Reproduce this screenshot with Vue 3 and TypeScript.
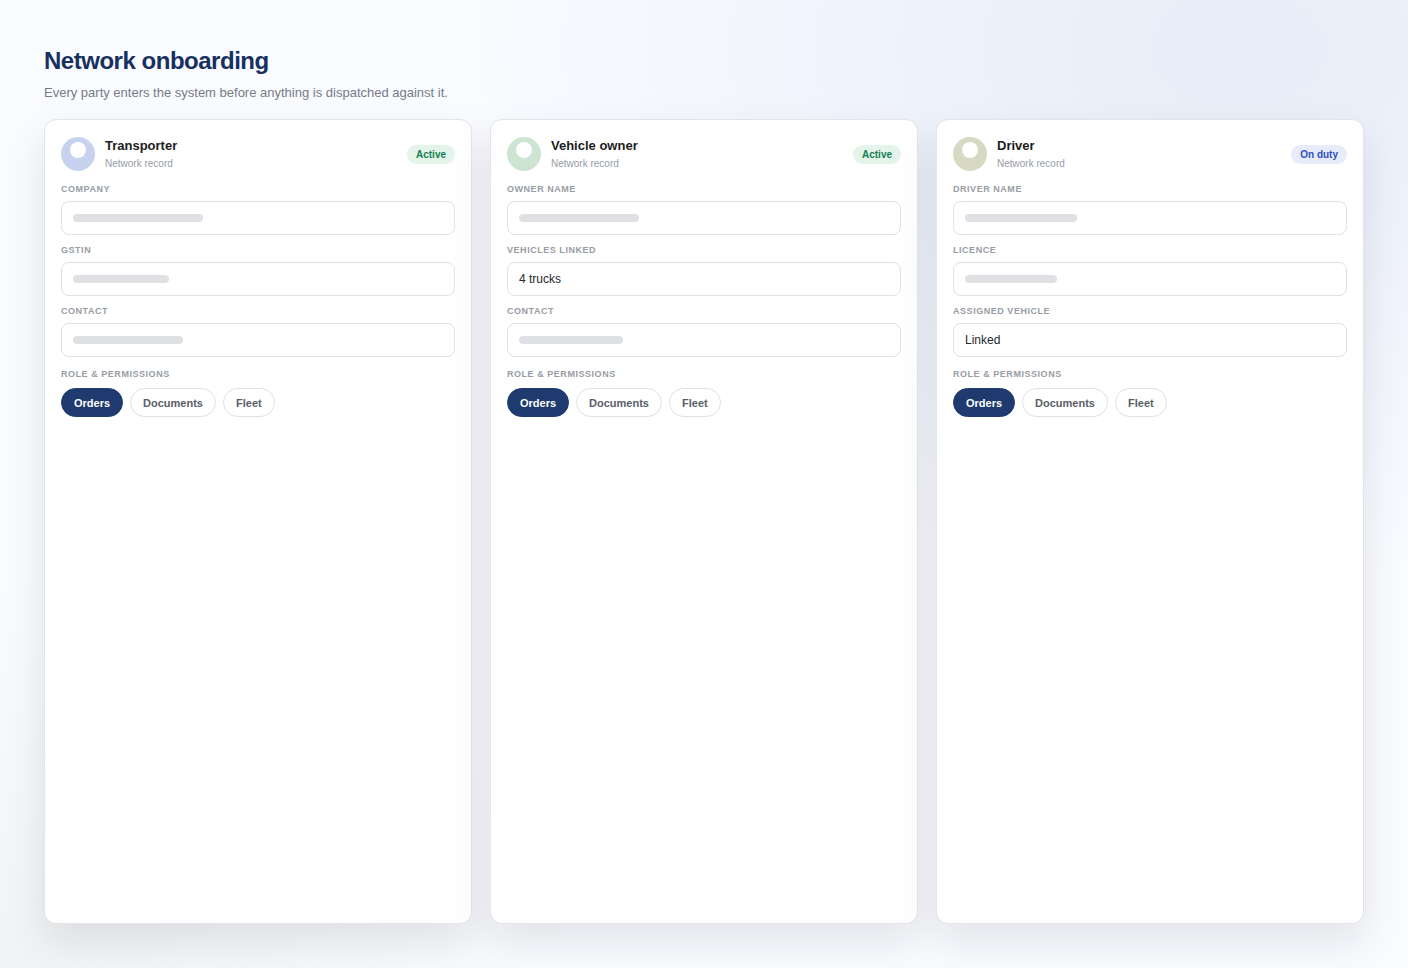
<script setup lang="ts">
import { reactive } from 'vue'

interface Field {
  id: string
  label: string
  value: string
  skeleton?: number
}

interface Party {
  id: string
  name: string
  status: string
  tone: 'green' | 'blue'
  avatar: 'sky' | 'mint' | 'olive'
  fields: Field[]
  active: string
}

const roles: string[] = ['Orders', 'Documents', 'Fleet']

const parties = reactive<Party[]>([
  {
    id: 'transporter',
    name: 'Transporter',
    status: 'Active',
    tone: 'green',
    avatar: 'sky',
    active: 'Orders',
    fields: [
      { id: 'company', label: 'Company', value: '', skeleton: 130 },
      { id: 'gstin', label: 'GSTIN', value: '', skeleton: 96 },
      { id: 'contact', label: 'Contact', value: '', skeleton: 110 },
    ],
  },
  {
    id: 'owner',
    name: 'Vehicle owner',
    status: 'Active',
    tone: 'green',
    avatar: 'mint',
    active: 'Orders',
    fields: [
      { id: 'name', label: 'Owner name', value: '', skeleton: 120 },
      { id: 'vehicles', label: 'Vehicles linked', value: '4 trucks' },
      { id: 'contact', label: 'Contact', value: '', skeleton: 104 },
    ],
  },
  {
    id: 'driver',
    name: 'Driver',
    status: 'On duty',
    tone: 'blue',
    avatar: 'olive',
    active: 'Orders',
    fields: [
      { id: 'name', label: 'Driver name', value: '', skeleton: 112 },
      { id: 'licence', label: 'Licence', value: '', skeleton: 92 },
      { id: 'vehicle', label: 'Assigned vehicle', value: 'Linked' },
    ],
  },
])
</script>

<template>
  <main class="page">
    <header class="intro">
      <h1>Network onboarding</h1>
      <p>Every party enters the system before anything is dispatched against it.</p>
    </header>

    <div class="cards">
      <section v-for="party in parties" :key="party.id" class="card">
        <div class="card-head">
          <svg class="avatar" :class="party.avatar" viewBox="0 0 34 34" aria-hidden="true">
            <circle cx="17" cy="17" r="17" fill="currentColor" />
            <circle cx="17" cy="13" r="8" fill="#fff" />
          </svg>
          <div class="who">
            <h2>{{ party.name }}</h2>
            <p>Network record</p>
          </div>
          <span class="badge" :class="party.tone">{{ party.status }}</span>
        </div>

        <div class="fields">
          <div v-for="field in party.fields" :key="field.id" class="field">
            <label class="caption" :for="`${party.id}-${field.id}`">{{ field.label }}</label>
            <div class="control">
              <input :id="`${party.id}-${field.id}`" v-model="field.value" type="text" />
              <span
                v-if="field.skeleton && !field.value"
                class="skeleton"
                :style="{ width: `${field.skeleton}px` }"
              ></span>
            </div>
          </div>
        </div>

        <div class="roles" role="group" :aria-labelledby="`${party.id}-roles`">
          <span :id="`${party.id}-roles`" class="caption">Role &amp; permissions</span>
          <div class="chips">
            <button
              v-for="role in roles"
              :key="role"
              type="button"
              class="chip"
              :class="{ selected: party.active === role }"
              :aria-pressed="party.active === role"
              @click="party.active = role"
            >
              {{ role }}
            </button>
          </div>
        </div>
      </section>
    </div>
  </main>
</template>

<style>
body {
  margin: 0;
}
</style>

<style scoped>
.page {
  box-sizing: border-box;
  min-height: 100vh;
  padding: 44px;
  display: flex;
  flex-direction: column;
  font-family: 'Liberation Sans', Arial, Helvetica, sans-serif;
  color: #1c1d21;
  background:
    radial-gradient(ellipse 55% 55% at 88% 5%, #e7ecf8, rgba(231, 236, 248, 0)),
    radial-gradient(ellipse 40% 40% at 0% 100%, #f2f3f4, rgba(242, 243, 244, 0)),
    #f9fbff;
}

h1,
h2,
p {
  margin: 0;
}

.intro {
  margin-bottom: 17px;
}

h1 {
  font-size: 24px;
  line-height: 34px;
  letter-spacing: -0.02em;
  color: #17305f;
}

.intro p {
  margin-top: 6px;
  font-size: 13px;
  line-height: 18px;
  color: #777c87;
}

.cards {
  flex: 1;
  display: grid;
  grid-template-columns: repeat(3, minmax(0, 1fr));
  gap: 18px;
}

.card {
  padding: 16px;
  border: 1px solid #e3e4e8;
  border-radius: 12px;
  background: #fff;
  box-shadow: 0 18px 40px rgba(20, 22, 26, 0.1);
}

.card-head {
  display: flex;
  align-items: center;
  gap: 10px;
  margin-bottom: 11px;
}

.avatar {
  width: 34px;
  height: 34px;
  flex: none;
}

.sky {
  color: #c7d3ee;
}

.mint {
  color: #cde4d2;
}

.olive {
  color: #d7d9c3;
}

.who {
  flex: 1;
  min-width: 0;
}

h2 {
  font-size: 13px;
  line-height: 20px;
}

.who p {
  font-size: 10px;
  line-height: 16px;
  color: #989ca5;
}

.badge {
  padding: 0 9px;
  border-radius: 10px;
  font-size: 10px;
  font-weight: 700;
  line-height: 19px;
  white-space: nowrap;
}

.green {
  color: #15804f;
  background: #e4f4eb;
}

.blue {
  color: #2f4fc0;
  background: #e7ebfa;
}

.fields {
  display: flex;
  flex-direction: column;
  gap: 9px;
}

.caption {
  display: block;
  font-size: 9px;
  font-weight: 700;
  line-height: 12px;
  letter-spacing: 0.06em;
  text-transform: uppercase;
  color: #989ca5;
}

.control {
  position: relative;
  margin-top: 6px;
}

input {
  display: block;
  box-sizing: border-box;
  width: 100%;
  height: 34px;
  padding: 0 11px;
  border: 1px solid #dfe0e4;
  border-radius: 8px;
  background: #fff;
  font: inherit;
  font-size: 12px;
  color: #26272b;
}

.skeleton {
  position: absolute;
  top: 13px;
  left: 12px;
  height: 8px;
  border-radius: 4px;
  background: #dfe0e4;
  pointer-events: none;
}

.roles {
  margin-top: 11px;
}

.chips {
  display: flex;
  flex-wrap: wrap;
  gap: 7px;
  margin-top: 8px;
}

.chip {
  height: 29px;
  padding: 0 12px;
  border: 1px solid #dfe0e4;
  border-radius: 15px;
  background: #fff;
  font: inherit;
  font-size: 11px;
  font-weight: 700;
  color: #5a5e68;
  cursor: pointer;
}

.chip.selected {
  border-color: #1e3a6e;
  background: #1e3a6e;
  color: #fff;
}
</style>
